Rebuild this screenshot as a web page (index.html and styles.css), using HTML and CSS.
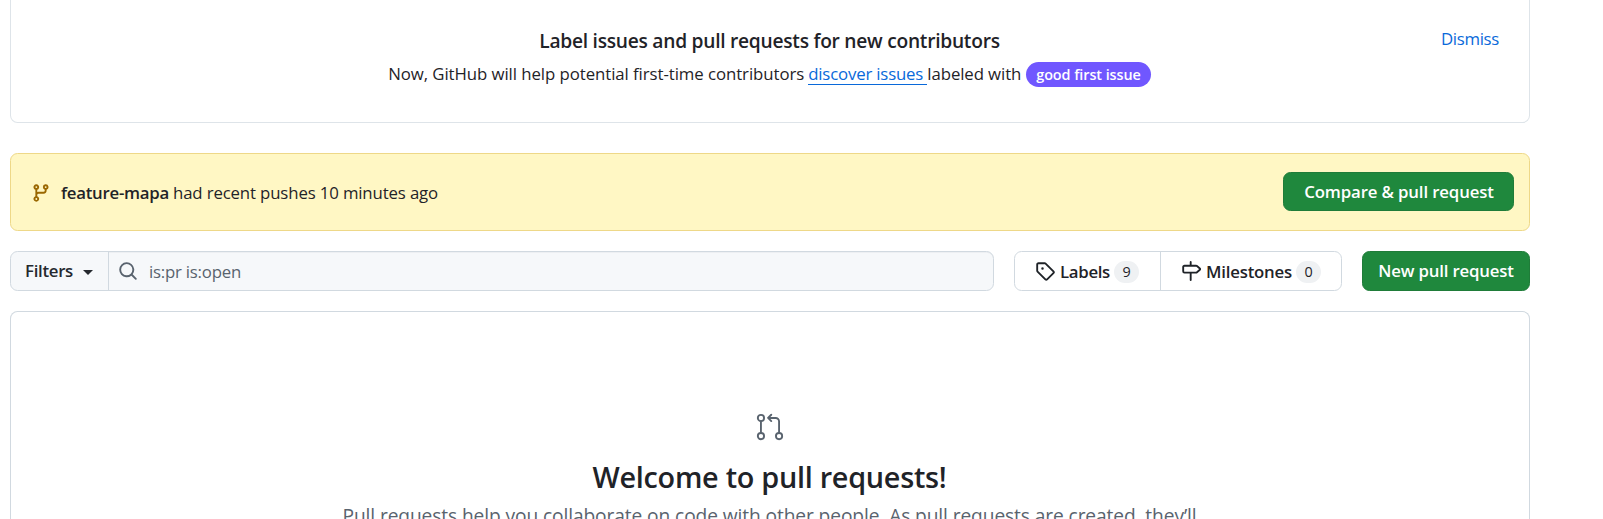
FILE: index.html
```
<!DOCTYPE html>
<html lang="en">
<head>
<meta charset="utf-8">
<title>Pull requests</title>
<link rel="stylesheet" href="styles.css">
</head>
<body>
<main class="page">
  <section class="protip">
    <div class="protip-body">
      <h2 class="protip-title">Label issues and pull requests for new contributors</h2>
      <p class="protip-text"><span class="protip-lead">Now, GitHub will help potential first-time contributors</span> <a class="protip-link">discover issues&nbsp;</a><span class="protip-tail">labeled with</span> <span class="issue-label">good first issue</span></p>
    </div>
    <a class="dismiss">Dismiss</a>
  </section>

  <section class="flash">
    <svg class="icon flash-icon" viewBox="0 0 16 16"><path d="M9.5 3.25a2.25 2.25 0 1 1 3 2.122V6A2.5 2.5 0 0 1 10 8.5H6a1 1 0 0 0-1 1v1.128a2.251 2.251 0 1 1-1.5 0V5.372a2.25 2.25 0 1 1 1.5 0v1.836A2.493 2.493 0 0 1 6 7h4a1 1 0 0 0 1-1v-.628A2.25 2.25 0 0 1 9.5 3.25Zm-6 0a.75.75 0 1 0 1.5 0 .75.75 0 0 0-1.5 0Zm8.25-.75a.75.75 0 1 0 0 1.5.75.75 0 0 0 0-1.5ZM4.25 12a.75.75 0 1 0 0 1.5.75.75 0 0 0 0-1.5Z"/></svg>
    <strong class="branch">feature-mapa</strong>
    <span class="pushed">had recent pushes 10 minutes ago</span>
    <button class="btn-primary btn-compare">Compare &amp; pull request</button>
  </section>

  <div class="subnav">
    <div class="search">
      <button class="filters">Filters<span class="caret"></span></button>
      <div class="search-field">
        <svg class="icon search-icon" viewBox="0 0 16 16"><path d="M10.68 11.74a6 6 0 0 1-7.922-8.982 6 6 0 0 1 8.982 7.922l3.04 3.04a.749.749 0 0 1-.326 1.275.749.749 0 0 1-.734-.215ZM11.5 7a4.499 4.499 0 1 0-8.997 0A4.499 4.499 0 0 0 11.5 7Z"/></svg>
        <span class="query">is:pr is:open</span>
      </div>
    </div>
    <nav class="links">
      <a class="link link-labels">
        <svg class="icon" viewBox="0 0 16 16"><path d="M1 7.775V2.75C1 1.784 1.784 1 2.75 1h5.025c.464 0 .91.184 1.238.513l6.25 6.25a1.75 1.75 0 0 1 0 2.474l-5.026 5.026a1.75 1.75 0 0 1-2.474 0l-6.25-6.25A1.752 1.752 0 0 1 1 7.775Zm1.5 0c0 .066.026.13.073.177l6.25 6.25a.25.25 0 0 0 .354 0l5.025-5.025a.25.25 0 0 0 0-.354l-6.25-6.25a.25.25 0 0 0-.177-.073H2.75a.25.25 0 0 0-.25.25ZM6 5a1 1 0 1 1 0 2 1 1 0 0 1 0-2Z"/></svg>
        <span class="labels-text">Labels</span><span class="counter">9</span>
      </a>
      <a class="link link-milestones">
        <svg class="icon" viewBox="0 0 16 16"><path d="M7.75 0a.75.75 0 0 1 .75.75V3h3.634c.414 0 .814.147 1.13.414l2.07 1.75a1.75 1.75 0 0 1 0 2.672l-2.07 1.75a1.75 1.75 0 0 1-1.13.414H8.5v5.25a.75.75 0 0 1-1.5 0V10H2.75A1.75 1.75 0 0 1 1 8.25v-3.5C1 3.784 1.784 3 2.75 3H7V.75A.75.75 0 0 1 7.75 0Zm4.384 8.5a.25.25 0 0 0 .161-.06l2.07-1.75a.248.248 0 0 0 0-.38l-2.07-1.75a.25.25 0 0 0-.161-.06H2.75a.25.25 0 0 0-.25.25v3.5c0 .138.112.25.25.25h9.384Z"/></svg>
        <span class="milestones-text">Milestones</span><span class="counter">0</span>
      </a>
    </nav>
    <button class="btn-primary btn-new">New pull request</button>
  </div>

  <section class="blankslate">
    <svg class="blank-icon" viewBox="0 0 24 24">
      <circle cx="4.75" cy="4.75" r="2.5"/>
      <circle cx="4.75" cy="19.25" r="2.5"/>
      <circle cx="19.25" cy="19.25" r="2.5"/>
      <path d="M4.75 7.25v9.5M10.6 4.75h5.9a2.75 2.75 0 0 1 2.75 2.75v9.25M13 2.2l-2.55 2.55L13 7.3"/>
    </svg>
    <h1 class="blank-title">Welcome to pull requests!</h1>
    <p class="blank-text">Pull requests help you collaborate on code with other people. As pull requests are created, they’ll</p>
  </section>
</main>
</body>
</html>
```
FILE: styles.css
```
* { box-sizing: border-box; }
body {
  margin: 0;
  height: 519px;
  overflow: hidden;
  background: #fff;
  color: #1f2328;
  font: 16.8px/26px "Open Sans", "Noto Sans", sans-serif;
}
h1, h2, p { margin: 0; white-space: nowrap; }
button { font: inherit; cursor: pointer; }
.page {
  width: 1520px;
  margin-left: 10px;
  display: flex;
  flex-direction: column;
}
.icon { width: 20px; height: 20px; fill: currentColor; flex: none; }

.protip {
  display: grid;
  height: 123px;
  border: 1px solid #d1d9e0b3;
  border-top: 0;
  border-radius: 0 0 7.5px 7.5px;
}
.protip-body, .dismiss { grid-area: 1 / 1; }
.protip-body {
  display: flex;
  flex-direction: column;
  align-items: center;
  padding: 26px 1px 0 0;
}
.protip-title {
  font-size: 19.2px;
  line-height: 30px;
  font-weight: 600;
  letter-spacing: -.262px;
}
.protip-text {
  display: flex;
  align-items: center;
  margin-top: 5px;
}
.protip-lead { letter-spacing: -.066px; margin-right: 4px; }
.protip-link {
  color: #0969da;
  letter-spacing: -.174px;
  line-height: 21px;
  border-bottom: 1px solid #0969da;
}
.protip-tail { letter-spacing: -.1px; margin-right: 5px; }
.issue-label {
  height: 25px;
  padding: 0 10px;
  border-radius: 13px;
  background: #7057ff;
  color: #fff;
  font-size: 14.4px;
  line-height: 25px;
  font-weight: 600;
  letter-spacing: -.06px;
}
.dismiss {
  justify-self: end;
  align-self: start;
  padding: 26px 30px 0 0;
  color: #0969da;
  letter-spacing: -.313px;
}

.flash {
  display: flex;
  align-items: center;
  height: 78px;
  margin-top: 30px;
  padding: 1px 15px 0 20px;
  background: #fff7c4;
  border: 1px solid #eed888;
  border-radius: 7.5px;
}
.flash-icon { color: #9a6700; margin-right: 10px; }
.branch { font-weight: 600; letter-spacing: -.251px; margin-right: 4px; }
.pushed { letter-spacing: -.139px; }

.btn-primary {
  padding: 0;
  border: 1px solid #1f7c39;
  border-radius: 7.5px;
  background: #1f883d;
  color: #fff;
  font-weight: 600;
  white-space: nowrap;
}
.btn-compare {
  width: 231px;
  height: 39px;
  margin: 0 0 3px auto;
  padding: 2px 0 0 1px;
  letter-spacing: -.134px;
}

.subnav { display: flex; height: 40px; margin-top: 20px; }
.search {
  display: flex;
  width: 984px;
  background: #f6f8fa;
  border: 1px solid #d1d9e0;
  border-radius: 7.5px;
}
.filters {
  display: flex;
  align-items: center;
  width: 98px;
  padding: 0 0 1px 14px;
  border: 0;
  border-right: 1px solid #d1d9e0;
  background: none;
  color: #25292e;
  font-weight: 600;
  letter-spacing: -.29px;
}
.caret {
  margin: 3px 0 0 10px;
  border: 5px solid transparent;
  border-top-color: currentColor;
  border-bottom: 0;
}
.search-field {
  flex: 1;
  display: flex;
  align-items: center;
  padding-left: 9px;
  color: #59636e;
  box-shadow: inset 0 1px 0 #1f23280a;
  border-radius: 0 6px 6px 0;
}
.query { margin: 2px 0 0 11px; letter-spacing: -.22px; }
.links {
  display: flex;
  width: 328px;
  margin-left: 20px;
  border: 1px solid #d1d9e0;
  border-radius: 7.5px;
}
.link { display: flex; align-items: center; padding-left: 20px; font-weight: 600; }
.link-labels { width: 146px; border-right: 1px solid #d1d9e0; }
.labels-text, .milestones-text { margin: 1px 0 0 5px; }
.labels-text { letter-spacing: -.305px; }
.milestones-text { letter-spacing: -.205px; }
.counter {
  width: 25px;
  height: 22px;
  margin: 1px 0 0 4px;
  border-radius: 12px;
  background: #eff1f3;
  font-size: 14.4px;
  line-height: 22px;
  font-weight: 500;
  text-align: center;
}
.btn-new {
  width: 168px;
  height: 40px;
  margin-left: 20px;
  padding-bottom: 1px;
  letter-spacing: -.168px;
}

.blankslate {
  display: flex;
  flex-direction: column;
  align-items: center;
  height: 208px;
  margin-top: 20px;
  padding: 100px 1px 0 0;
  overflow: hidden;
  border: 1px solid #d1d9e0;
  border-bottom: 0;
  border-radius: 7.5px 7.5px 0 0;
}
.blank-icon {
  width: 30px;
  height: 30px;
  flex: none;
  fill: none;
  stroke: #59636e;
  stroke-width: 1.5;
  stroke-linecap: round;
  stroke-linejoin: round;
}
.blank-title {
  margin-top: 12px;
  font-size: 28.8px;
  line-height: 45px;
  font-weight: 600;
  letter-spacing: -.267px;
}
.blank-text {
  margin-top: 2px;
  color: #59636e;
  font-size: 19.2px;
  line-height: 30px;
  letter-spacing: -.11px;
}
```
